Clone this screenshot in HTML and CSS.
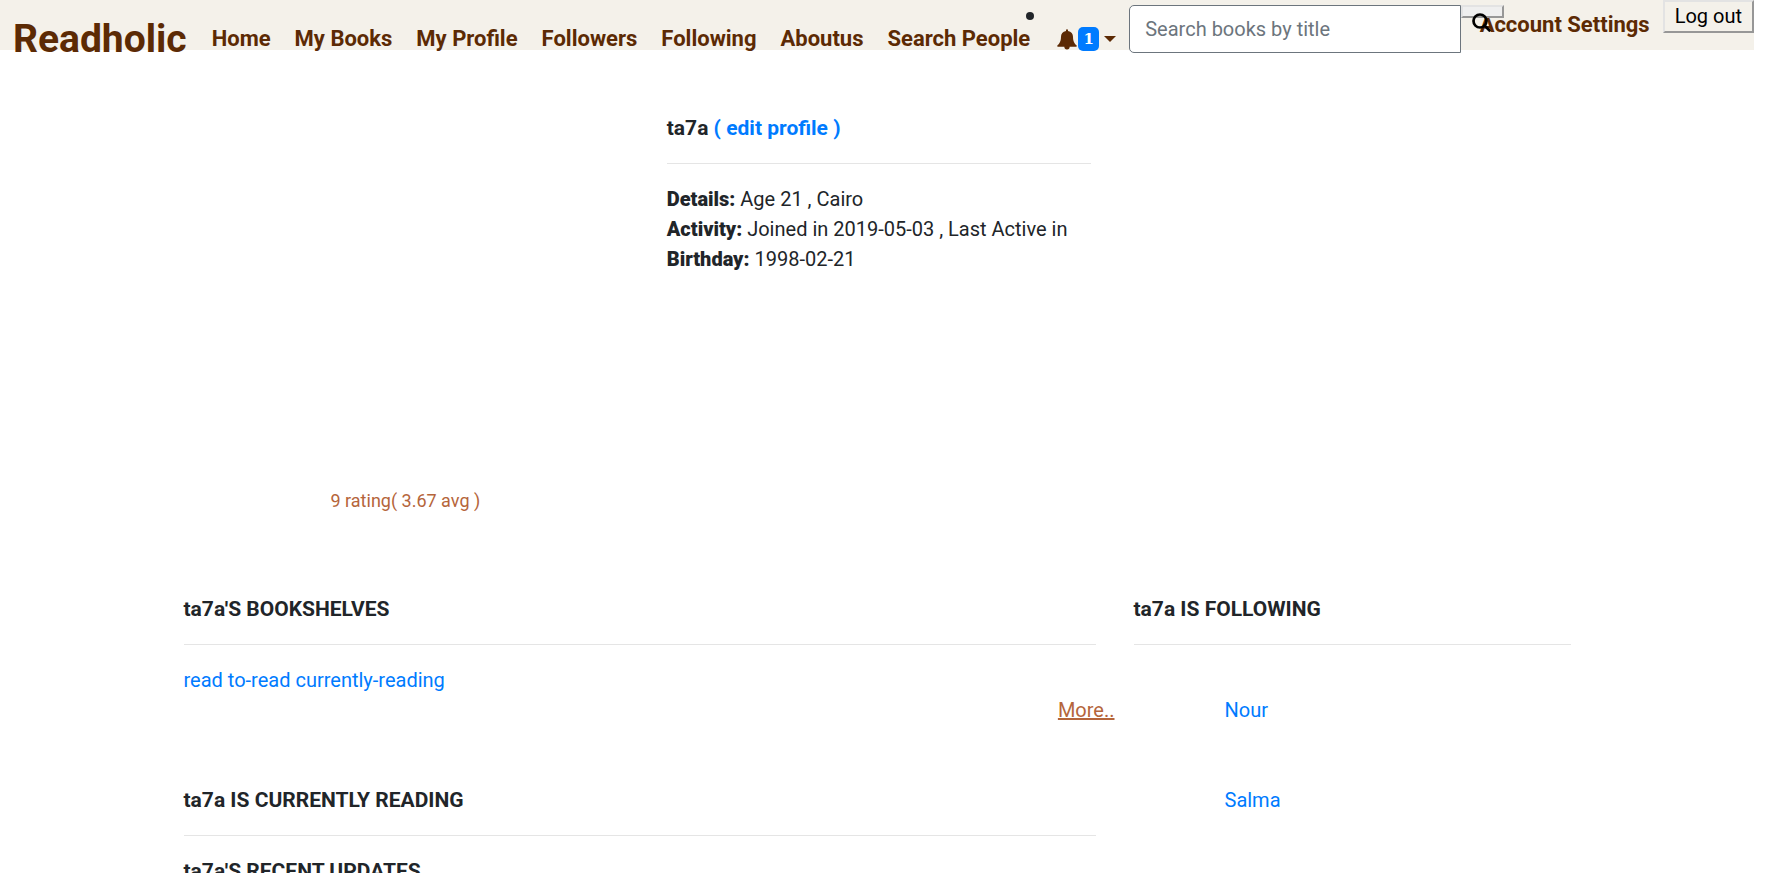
FILE: index.html
```html
<!DOCTYPE html>
<html lang="en">
<head>
<meta charset="utf-8">
<title>Readholic</title>
<link rel="stylesheet" href="styles.css">
</head>
<body>
<header class="navbar">
  <a class="brand" href="#">Readholic</a>
  <nav class="links">
    <a href="#">Home</a>
    <a href="#">My Books</a>
    <a href="#">My Profile</a>
    <a href="#">Followers</a>
    <a href="#">Following</a>
    <a href="#">Aboutus</a>
    <a href="#">Search People</a>
  </nav>
  <div class="notify">
    <span class="bullet"></span>
    <button class="bell" type="button" aria-label="Notifications">
      <svg width="20" height="21" viewBox="0 0 20 21" aria-hidden="true"><path fill="currentColor" d="M9 1.2a1 1 0 0 1 2 0v.7c3.300.500 5 2.900 5 5.800 0 4.600 1.400 6.800 3.600 8.600v1.500H.400v-1.500C2.600 14.500 4 12.300 4 7.700c0-2.900 1.700-5.300 5-5.800zM7.300 17.500h5.400a2.700 2.900 0 0 1-5.400 0z"/></svg>
      <span class="badge">1</span>
      <span class="caret"></span>
    </button>
  </div>
  <form class="search">
    <input class="search-input" type="text" placeholder="Search books by title" aria-label="Search books by title">
    <button class="search-button" type="button" aria-label="Search">
      <svg class="search-icon" width="20" height="20" viewBox="0 0 20 20" aria-hidden="true"><circle cx="8" cy="8" r="6.500" fill="none" stroke="#000" stroke-width="2.700"/><path d="M12.500 12.500l5 5" stroke="#000" stroke-width="2.700" stroke-linecap="round"/></svg>
    </button>
  </form>
  <a class="account" href="#">Account Settings</a>
  <button class="logout" type="button">Log out</button>
</header>
<main class="container">
  <section class="profile">
    <div class="picture"><p class="rating">9 rating( 3.67 avg )</p></div>
    <div class="about">
      <h1 class="title">ta7a <a href="#">( edit profile )</a></h1>
      <hr>
      <p><b>Details:</b> Age 21 , Cairo</p>
      <p><b>Activity:</b> Joined in 2019-05-03 , Last Active in</p>
      <p><b>Birthday:</b> 1998-02-21</p>
    </div>
  </section>
  <div class="columns">
    <div class="main-column">
      <section class="shelves">
        <h2 class="title">ta7a'S BOOKSHELVES</h2>
        <hr>
        <p><a href="#">read</a> <a href="#">to-read</a> <a href="#">currently-reading</a></p>
        <p class="more"><a href="#">More..</a></p>
      </section>
      <section>
        <h2 class="title">ta7a IS CURRENTLY READING</h2>
        <hr>
      </section>
      <section>
        <h2 class="title">ta7a'S RECENT UPDATES</h2>
        <hr>
      </section>
    </div>
    <section class="side-column">
      <h2 class="title">ta7a IS FOLLOWING</h2>
      <hr>
      <ul class="following">
        <li><a href="#">Nour</a></li>
        <li><a href="#">Salma</a></li>
      </ul>
    </section>
  </div>
</main>
</body>
</html>
```
FILE: styles.css
```css
* { box-sizing: border-box; }
body {
  margin: 0;
  height: 100vh;
  overflow: hidden;
  padding-right: 21px;
  background: #fff;
  color: #212529;
  font-family: Roboto, sans-serif;
  font-size: 20px;
  line-height: 30px;
}
a { color: #007bff; text-decoration: none; }
b { font-weight: 900; }
p, ul { margin: 0; padding: 0; }
hr { margin: 20px 0; border: 0; border-top: 1px solid #e5e5e5; }

.navbar {
  display: flex;
  align-items: flex-start;
  height: 50px;
  padding-left: 13px;
  background: #f4f1ea;
  color: #5c2a04;
}
.navbar a { color: inherit; font-weight: 700; font-size: 22px; white-space: nowrap; }
.navbar button { font-family: inherit; font-size: 20px; }
.navbar .brand { font-size: 39px; line-height: 50px; padding-top: 14px; }
.links { display: flex; gap: 24px; padding: 24px 0 0 25px; }
.notify { position: relative; padding: 27px 0 0 27px; }
.bullet {
  position: absolute;
  top: 12px;
  left: -4px;
  width: 8px;
  height: 8px;
  border-radius: 50%;
  background: #212529;
}
.bell {
  display: flex;
  align-items: center;
  padding: 0;
  border: 0;
  background: none;
  color: inherit;
}
.badge {
  width: 21px;
  margin-left: 1px;
  border-radius: 5px;
  background: #007bff;
  color: #fff;
  font: bold 15px/24px "DejaVu Serif", serif;
}
.caret {
  margin: 0 13px 0 5px;
  border: 6px solid transparent;
  border-top-color: currentColor;
  border-bottom: 0;
}
.search { display: flex; flex: 1; align-items: flex-start; padding-top: 5px; }
.search-input {
  flex: 1;
  min-width: 0;
  height: 48px;
  padding: 0 15px;
  border: 1px solid #6c757d;
  border-radius: 5px 0 0 5px;
  background: #fff;
  color: #495057;
  font: inherit;
}
.search-input::placeholder { color: #6c757d; opacity: 1; }
.search-button,
.logout {
  border: 2px solid;
  border-color: #e3e3e3 #979797 #979797 #e3e3e3;
}
.search-button {
  position: relative;
  width: 43px;
  height: 13px;
  padding: 0;
  background: #efefef;
}
.search-icon { position: absolute; top: 6px; left: 9px; z-index: 1; }
.account { margin-left: -24px; padding: 10px 13px 0 0; }
.logout {
  height: 33px;
  padding: 0 10px 2px;
  background: #f4f1ea;
  color: #000;
  line-height: 26px;
}

.container { width: 82%; max-width: 1425px; margin: 0 auto; padding-top: 63px; }
.profile { display: grid; grid-template-columns: 1fr 424px; width: 65%; min-height: 481px; }
.picture { padding: 373px 0 0 166px; }
.rating { color: #b5653b; font-size: 18px; }
.about { white-space: nowrap; }
.title { margin: 0; font-size: 21px; line-height: 30px; font-weight: 700; }
.columns { display: grid; grid-template-columns: 2fr 1fr; }
.main-column { padding: 0 19px; }
.side-column { padding: 0 19px; }
.shelves { padding-bottom: 60px; }
.more { margin-right: -19px; text-align: right; }
.more a { color: #b5653b; text-decoration: underline; }
.following { display: grid; gap: 60px; padding: 30px 0 0 91px; list-style: none; }
```
